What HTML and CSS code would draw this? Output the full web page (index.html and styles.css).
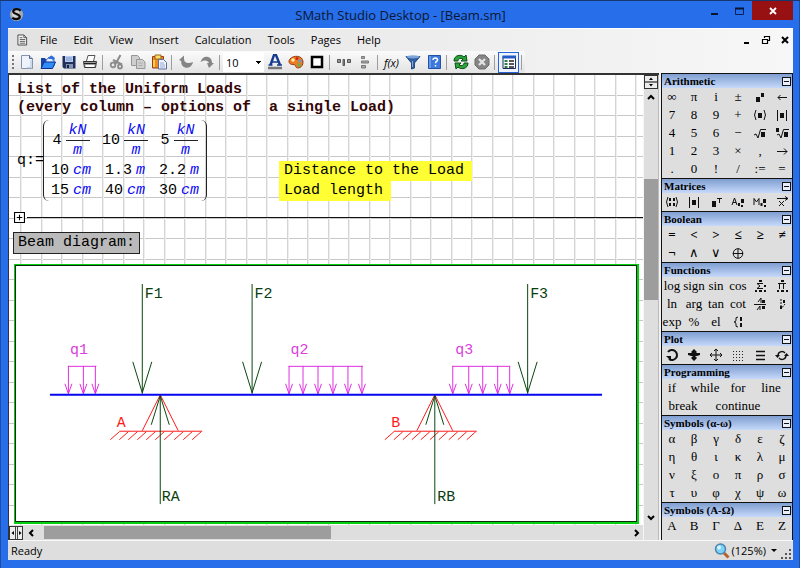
FILE: index.html
```html
<!DOCTYPE html>
<html lang="en">
<head>
<meta charset="utf-8">
<title>SMath Studio Desktop - [Beam.sm]</title>
<link rel="stylesheet" href="styles.css">
</head>
<body>
<div class="window">
  <header class="titlebar">
    <svg class="logo" viewBox="0 0 16 16"><circle cx="8" cy="8" r="7" fill="#a9a9a9"/><circle cx="7" cy="7" r="4" fill="#d4d4d4"/><path d="M12.5 4C10.500 1.500 4.500 1.800 4.500 4.800C4.500 8 11.500 7 11.500 10.500C11.500 13.500 5.500 13.800 3.500 11.500" fill="none" stroke="#0b0b0b" stroke-width="2.400"/></svg>
    <h1 class="title">SMath Studio Desktop - [Beam.sm]</h1>
    <div class="caption-buttons">
      <button class="cap" aria-label="Minimize"><svg viewBox="0 0 10 10"><path d="M1 8h7" stroke="#0a1530" stroke-width="2"/></svg></button>
      <button class="cap" aria-label="Maximize"><svg viewBox="0 0 10 10"><path d="M.5 2.500h8v6h-8z" fill="none" stroke="#0a1f55"/><path d="M0 2.500h9" stroke="#0a1530" stroke-width="2"/></svg></button>
      <button class="cap cap-close" aria-label="Close"><svg viewBox="0 0 10 10"><path d="M2 2l6 6M8 2l-6 6" stroke="#fff" stroke-width="1.800"/></svg></button>
    </div>
  </header>

  <div class="client">
    <nav class="menubar">
      <svg class="doc" viewBox="0 0 12 12"><path d="M1 .5h6.500l3 3v8h-9.500z" fill="#f4f4f4" stroke="#444"/><path d="M7.500 .5v3h3M3 3.500h3M3 5.500h6M3 7.500h6M3 9.500h6" fill="none" stroke="#555"/></svg>
      <ul class="menus">
        <li><button>File</button></li><li><button>Edit</button></li><li><button>View</button></li><li><button>Insert</button></li><li><button>Calculation</button></li><li><button>Tools</button></li><li><button>Pages</button></li><li><button>Help</button></li>
      </ul>
      <div class="mdi">
        <button aria-label="Minimize document"><svg viewBox="0 0 10 10"><path d="M2 8h5" stroke="#000" stroke-width="2"/></svg></button>
        <button aria-label="Restore document"><svg viewBox="0 0 10 10"><path d="M3.500 3V1.500h5v4H7M3 1.500h6" fill="none" stroke="#000" stroke-width="1.200"/><path d="M1.500 4.500h5v4h-5zM1 4.500h6" fill="none" stroke="#000" stroke-width="1.200"/></svg></button>
        <button aria-label="Close document"><svg viewBox="0 0 10 10"><path d="M2 2l6 6M8 2l-6 6" stroke="#000" stroke-width="2"/></svg></button>
      </div>
    </nav>

    <div class="toolbar" role="toolbar">
      <span class="grip"></span>
      <button aria-label="New"><svg viewBox="0 0 16 16"><path d="M2.500 1.500h8l3 3v10h-11z" fill="#eef3fb" stroke="#8593ab"/><path d="M10.500 1.500v3h3" fill="#c9d6ec" stroke="#4d6693"/><path d="M12 6v7.500H8" fill="none" stroke="#c3d2ea" stroke-width="1.500"/></svg></button>
      <button aria-label="Open"><svg viewBox="0 0 16 16"><path d="M1 4h4l1.500 2H12v8H1z" fill="#1944ab"/><path d="M6 6l5-4 3 3v7H6z" fill="#d9ebff" stroke="#3467c9"/><path d="M8 3h4l-1-2 4 3-2 3-1-2H9z" fill="#2c6ee0"/><path d="M1 14.500l3-6.500h11.500l-3 6.500z" fill="#2f8bf5" stroke="#0b2f93"/></svg></button>
      <button aria-label="Save"><svg viewBox="0 0 16 16"><path d="M2 2h12.500v12.500H3L1.500 13V2z" fill="#22305c"/><path d="M4 2h8v6H4z" fill="#b8cdf1"/><path d="M5 4h6M5 6h6" stroke="#7c98cd"/><path d="M5 10h7v4.500H5z" fill="#8492b4"/><path d="M6 11h2v3H6z" fill="#17213f"/></svg></button>
      <button aria-label="Print"><svg viewBox="0 0 16 16"><path d="M4.500 7l1.500-5.500h7L11.500 7" fill="#fff" stroke="#555"/><path d="M1.500 7.500h13l-1 6h-11z" fill="#c9ccc9" stroke="#333"/><path d="M2 9.500h12" stroke="#222" stroke-width="1.500"/><path d="M4 12h8" stroke="#fff" stroke-width="2"/></svg></button>
      <span class="sep"></span>
      <button aria-label="Cut"><svg viewBox="0 0 16 16" fill="none" stroke="#8b8b8b"><path d="M11.500 1L6.500 10M4 6l9 4.500" stroke-width="2"/><circle cx="4" cy="11" r="2.300" stroke-width="1.800"/><circle cx="11" cy="12.500" r="2" stroke-width="1.800"/></svg></button>
      <button aria-label="Copy"><svg viewBox="0 0 16 16" fill="#cfcfcf" stroke="#969696"><path d="M1.500 1.500h6l2 2v8h-8z"/><path d="M6.500 5.500h6l2.500 2.500v6.500H6.500z"/><path d="M8.500 9h4M8.500 11.500h4" stroke="#aaa"/></svg></button>
      <button aria-label="Paste"><svg viewBox="0 0 16 16"><path d="M1.500 2.500h11v11.500h-11z" fill="#f08b22" stroke="#9a3e18"/><path d="M4 1h6v4H4z" fill="#ffe06a" stroke="#9c6417"/><path d="M3 6v7" stroke="#fbd04f" stroke-width="2"/><path d="M7.500 5.500h5l3 3v6.500h-8z" fill="#edf2ff" stroke="#5c6f9c"/><path d="M9 9h4M9 11h5M9 13h5" stroke="#9aacd4"/></svg></button>
      <span class="sep"></span>
      <button aria-label="Undo"><svg viewBox="0 0 16 16"><path d="M1 6l5-4.500v3c0 5 5 5.500 9 3.500-1 5-5 6.500-8 5.500C4 12.500 3 10 3.200 7z" fill="#858585"/></svg></button>
      <button aria-label="Redo"><svg viewBox="0 0 16 16"><path d="M15 9l-5 5-2-5h2C9 6 5 5.500 1.500 8 3 3.500 6 2 9 3c3 .8 4 3 4 6z" fill="#858585"/></svg></button>
      <span class="sep"></span>
      <select class="size" aria-label="Font size"><option>10</option></select>
      <button aria-label="Text colour"><svg viewBox="0 0 16 16"><path d="M3.500 11L7 1h2l4 10" fill="none" stroke="#153b91" stroke-width="2.400"/><path d="M5 8h6M1.500 11h4M10 11h5" stroke="#153b91" stroke-width="1.600"/><path d="M1 14h14" stroke="#777" stroke-width="2.500"/></svg></button>
      <button aria-label="Background colour"><svg viewBox="0 0 16 16"><path d="M2 5C5 1 15 1 15 8c0 6-6 7-7 5-.7-2-1-2.500-3-2.500C1 10.500 0 7.500 2 5z" fill="#ec7d24" stroke="#9a3c17"/><circle cx="5" cy="6" r="1.700" fill="#fff3a3"/><circle cx="9" cy="4.500" r="1.500" fill="#c9271e"/><circle cx="12" cy="7" r="1.500" fill="#5b9ce7"/><circle cx="11" cy="11" r="1.700" fill="#5eb24d"/></svg></button>
      <button aria-label="Border"><svg viewBox="0 0 16 16"><path d="M3 3h10v10H3z" fill="#fff" stroke="#000" stroke-width="2.500"/></svg></button>
      <span class="sep"></span>
      <button aria-label="Align horizontally"><svg viewBox="0 0 16 16" fill="#999" stroke="#555"><path d="M1.500 5.500h3v3h-3zM7 5.500h1.500v6H7zM11.500 5.500h3v3h-3z"/></svg></button>
      <button aria-label="Align vertically"><svg viewBox="0 0 16 16" fill="#aaa" stroke="#777"><path d="M4.500 2.500h3v2h-3zM4.500 7h7v2h-7zM4.500 11.500h4v2.500h-4z"/></svg></button>
      <span class="sep"></span>
      <button class="fx">f(x)</button>
      <button aria-label="Filter"><svg viewBox="0 0 16 16"><path d="M1 2.500h14L9.500 9v5l-3 1V9z" fill="#315ea5" stroke="#28497c"/><ellipse cx="8" cy="2.800" rx="6.500" ry="1.600" fill="#7da5da"/><path d="M7.500 7v6" stroke="#83acdf"/></svg></button>
      <button aria-label="Help book"><svg viewBox="0 0 16 16"><path d="M2.500 1.500h12v13h-12z" fill="#3b79dc" stroke="#2450a5"/><path d="M4 2v12" stroke="#93bcf5"/><path d="M7 6c0-3 5-2.500 4.500.2-.2 1.300-2 1.300-2 3M9.500 11v1.500" fill="none" stroke="#fff" stroke-width="1.500"/></svg></button>
      <span class="sep"></span>
      <button aria-label="Recalculate"><svg viewBox="0 0 16 16"><path d="M1 7c0-6 7-7 10-4l2-2 1 6H8l2-2C7 3.500 5 5 5 7z" fill="#2ba53a" stroke="#0a4d14"/><path d="M15 9c0 6-7 7-10 4l-2 2-1-6h6l-2 2c3 1.500 5 0 5-2z" fill="#2ba53a" stroke="#0a4d14"/></svg></button>
      <button aria-label="Stop"><svg viewBox="0 0 16 16"><path d="M5 1h6l4 4v6l-4 4H5l-4-4V5z" fill="#858585" stroke="#6c6c6c"/><path d="M5 5l6 6M11 5l-6 6" stroke="#e4e4e4" stroke-width="2.200"/></svg></button>
      <span class="sep"></span>
      <button class="on" aria-label="Side panel"><svg viewBox="0 0 16 16"><path d="M2 2.500h12.500v12H2z" fill="#fff" stroke="#1b2a5d"/><path d="M1.500 3h13.500" stroke="#2457c8" stroke-width="3"/><path d="M3.500 7h3M3.500 10h3M3.500 13h3" stroke="#27814b" stroke-width="1.800"/><path d="M8 7h5M8 10h5M8 13h5" stroke="#222" stroke-width="1.500"/></svg></button>
      <span class="sep"></span>
    </div>

    <div class="workspace">
      <main class="editor">
        <div class="sheet">
          <h2 class="heading">
            <span>List of the Uniform Loads</span>
            <span class="split"><span>(every column – options of</span><span>a single Load)</span></span>
          </h2>
          <div class="formula-row">
            <div class="formula">
              <span class="lhs">q:=</span>
              <table class="matrix">
                <tr class="loads">
                  <td><span class="val">4<span class="frac"><i>kN</i><i>m</i></span></span></td>
                  <td><span class="val">10<span class="frac"><i>kN</i><i>m</i></span></span></td>
                  <td><span class="val">5<span class="frac"><i>kN</i><i>m</i></span></span></td>
                </tr>
                <tr><td><span class="val">10<i>cm</i></span></td><td><span class="val">1.3<i>m</i></span></td><td><span class="val">2.2<i>m</i></span></td></tr>
                <tr><td><span class="val">15<i>cm</i></span></td><td><span class="val">40<i>cm</i></span></td><td><span class="val">30<i>cm</i></span></td></tr>
              </table>
            </div>
            <div class="notes"><mark>Distance to the Load</mark><mark>Load length</mark></div>
          </div>
          <div class="area"><button aria-label="Expand area"><svg viewBox="0 0 10 10"><path d="M.5.5h9v9h-9z" fill="#fff" stroke="#000"/><path d="M2.500 5h5M5 2.500v5" stroke="#000"/></svg></button></div>
          <p class="caption">Beam diagram:</p>
          <figure class="plot">
            <svg viewBox="16 266 621 255" preserveAspectRatio="xMinYMin meet" role="img" aria-label="Beam diagram">
              <defs>
                <g id="force"><path d="M.5 0V110"/><path d="M-9 78L.5 109L10 78"/></g>
                <g id="q"><path d="M.5 0V28"/><path d="M-3 18L.5 28L4 18"/></g>
                <g id="support">
                  <path d="M0 395L-18 431M0 395L18 431M-41 431.500H42" stroke="#ff1a1a"/>
                  <path d="M-50 440l9-8M-41 440l9-8M-32 440l9-8M-23 440l9-8M-14 440l9-8M-5 440l9-8M4 440l9-8M14 440l9-8M23 440l9-8M32 440l9-8" stroke="#ff1a1a"/>
                  <path d="M0 396V504.500" stroke="#0a460f"/>
                  <path d="M-9 425L0 396L9 425" stroke="#0a460f"/>
                </g>
              </defs>
              <g fill="none" stroke="#e030e0">
                <path d="M68 366.500h28.500M289 366.500h74.500M453 366.500h57.500"/>
                <use href="#q" x="68" y="366"/><use href="#q" x="83" y="366"/><use href="#q" x="95" y="366"/>
                <use href="#q" x="289" y="366"/><use href="#q" x="303" y="366"/><use href="#q" x="318" y="366"/><use href="#q" x="333" y="366"/><use href="#q" x="348" y="366"/><use href="#q" x="362" y="366"/>
                <use href="#q" x="453" y="366"/><use href="#q" x="469" y="366"/><use href="#q" x="483" y="366"/><use href="#q" x="498" y="366"/><use href="#q" x="510" y="366"/>
              </g>
              <g fill="none" stroke="#0a460f">
                <use href="#force" x="142" y="284"/><use href="#force" x="252" y="284"/><use href="#force" x="528" y="284"/>
              </g>
              <g fill="none"><use href="#support" x="160.500"/><use href="#support" x="435.500"/></g>
              <path d="M50 395H603" stroke="#0505f0" stroke-width="2"/>
              <g class="force-label"><text x="145" y="298">F1</text><text x="255" y="298">F2</text><text x="531" y="298">F3</text><text x="162" y="501">RA</text><text x="438" y="501">RB</text></g>
              <g class="load-label"><text x="70" y="354">q1</text><text x="291" y="354">q2</text><text x="456" y="354">q3</text></g>
              <g class="support-label"><text x="117" y="427">A</text><text x="392" y="427">B</text></g>
            </svg>
          </figure>
        </div>
        <div class="vscroll">
          <button class="splitter" aria-label="Split view"><svg viewBox="0 0 14 14"><path d="M0 7h14" stroke="#777" stroke-width="2"/><path d="M5 5l2-2.500L9 5zM5 9l2 2.500L9 9z" fill="#000"/></svg></button>
          <button aria-label="Scroll up"><svg viewBox="0 0 14 14"><path d="M4 10l3-3 3 3" fill="none" stroke="#000" stroke-width="2"/></svg></button>
          <div class="vtrack"><div class="vthumb"></div></div>
          <button aria-label="Scroll down"><svg viewBox="0 0 14 14"><path d="M4 5l3 3 3-3" fill="none" stroke="#000" stroke-width="2"/></svg></button>
        </div>
        <div class="hscroll">
          <button class="splitter" aria-label="Split columns"><svg viewBox="0 0 14 14"><path d="M6.500 1v12M8.500 1v12" stroke="#444"/><path d="M5 5L2.500 7L5 9zM10 5l2.500 2L10 9z" fill="#000"/></svg></button>
          <button aria-label="Scroll left"><svg viewBox="0 0 14 14"><path d="M10 4L7 7l3 3" fill="none" stroke="#000" stroke-width="2"/></svg></button>
          <div class="htrack"><div class="hthumb"></div></div>
          <button aria-label="Scroll right"><svg viewBox="0 0 14 14"><path d="M6 4l3 3-3 3" fill="none" stroke="#000" stroke-width="2"/></svg></button>
        </div>
      </main>

      <aside class="palettes">
        <section><h3>Arithmetic<button class="fold" aria-label="Collapse"></button></h3>
          <div class="keys">
            <button>∞</button><button>π</button><button>i</button><button>±</button><button aria-label="Power"><svg viewBox="0 0 16 16"><path d="M4 8h4v5H4zM9 4h3v4H9z"/></svg></button><button aria-label="Result"><svg viewBox="0 0 16 16"><path d="M4 8.500h9M6.500 6L4 8.500L6.500 11" fill="none" stroke="#111"/></svg></button>
            <button>7</button><button>8</button><button>9</button><button>+</button><button aria-label="Parentheses"><svg viewBox="0 0 16 16"><path d="M6 6h4v5H6z"/><path d="M4 3Q1 8 4 13M12 3q3 5 0 10" fill="none" stroke="#111"/></svg></button><button aria-label="Absolute value"><svg viewBox="0 0 16 16"><path d="M6 6h4v5H6z"/><path d="M3.500 3v11M12.500 3v11" stroke="#111"/></svg></button>
            <button>4</button><button>5</button><button>6</button><button>−</button><button aria-label="Square root"><svg viewBox="0 0 16 16"><path d="M9 7h4v5H9z"/><path d="M2 10l2-1 2 4L8.500 4.500H14" fill="none" stroke="#111"/></svg></button><button aria-label="Nth root"><svg viewBox="0 0 16 16"><path d="M10 7h4v5h-4zM2 3h3v4H2z"/><path d="M3 10l2-1 2 4L9.500 4.500H15" fill="none" stroke="#111"/></svg></button>
            <button>1</button><button>2</button><button>3</button><button>×</button><button>,</button><button aria-label="Symbolic evaluation"><svg viewBox="0 0 16 16"><path d="M3 8.500h10M10 5.500l3 3-3 3" fill="none" stroke="#111"/></svg></button>
            <button>.</button><button>0</button><button>!</button><button>/</button><button>:=</button><button>=</button>
          </div></section>
        <section><h3>Matrices<button class="fold" aria-label="Collapse"></button></h3>
          <div class="keys">
            <button aria-label="Matrix"><svg viewBox="0 0 16 16"><path d="M5 4h2v3H5zM9 4h2v3H9zM5 9h2v3H5zM9 9h2v3H9z"/><path d="M4 3Q1 8 4 13M12 3q3 5 0 10" fill="none" stroke="#111"/></svg></button>
            <button aria-label="Determinant"><svg viewBox="0 0 16 16"><path d="M6 6h4v5H6z"/><path d="M3.500 3v11M12.500 3v11" stroke="#111"/></svg></button>
            <button aria-label="Transpose"><svg viewBox="0 0 16 16"><path d="M4 7h4v6H4z"/><path d="M9 4.500h5M11.500 4.500V9" stroke="#111"/></svg></button>
            <button aria-label="Algebraic addition"><svg viewBox="0 0 16 16"><path d="M2 11L4.500 4L7 11M3 8.500h3" fill="none" stroke="#111"/><path d="M8 9h2v3H8zM11 5h3v4h-3zM11 11h2v2h-2z"/></svg></button>
            <button aria-label="Minor"><svg viewBox="0 0 16 16"><path d="M2 11V4.500L4.500 8L7 4.500V11" fill="none" stroke="#111"/><path d="M8.500 9h2v3h-2zM11 5h3v4h-3zM12 11h2v2h-2z"/></svg></button>
            <button aria-label="Cross product"><svg viewBox="0 0 16 16"><path d="M3 4.500h11M11 2.500l3 2-3 2M5 7l5 5M10 7l-5 5" fill="none" stroke="#111"/></svg></button>
          </div></section>
        <section><h3>Boolean<button class="fold" aria-label="Collapse"></button></h3>
          <div class="keys bold">
            <button>=</button><button>&lt;</button><button>&gt;</button><button>≤</button><button>≥</button><button>≠</button>
            <button>¬</button><button class="thin">∧</button><button class="thin">∨</button><button aria-label="Exclusive or"><svg viewBox="0 0 16 16"><path d="M8 3.500v10M3 8.500h10" stroke="#111"/><circle cx="8" cy="8.500" r="4.800" fill="none" stroke="#111"/></svg></button>
          </div></section>
        <section><h3>Functions<button class="fold" aria-label="Collapse"></button></h3>
          <div class="keys">
            <button>log</button><button>sign</button><button>sin</button><button>cos</button>
            <button aria-label="Sum"><svg viewBox="0 0 16 16"><path d="M11 5.500H5L8 8l-3 2.500h6" fill="none" stroke="#111"/><path d="M7 2h3v2H7zM3 12h2v2H3zM7 12h3v2H7zM12 12h2v2h-2zM12 7h2v2h-2z"/></svg></button>
            <button aria-label="Product"><svg viewBox="0 0 16 16"><path d="M4 5.500h8M5.500 5v6M9.500 5v6" fill="none" stroke="#111"/><path d="M7 2h3v2H7zM3 12h2v2H3zM7 12h3v2H7zM12 12h2v2h-2z"/></svg></button>
            <button>ln</button><button>arg</button><button>tan</button><button>cot</button>
            <button aria-label="Derivative"><svg viewBox="0 0 16 16"><path d="M2 8.500h12M6 6l3-4v5M5 14l3-4v4" fill="none" stroke="#111"/><path d="M10 4h3v3h-3zM10 10h3v3h-3z"/></svg></button>
            <button aria-label="System"><svg viewBox="0 0 16 16"><path d="M7 3v10l4-5" fill="none" stroke="#111" stroke-dasharray="2 1"/><path d="M9 4h2v3H9zM6 10h2v3H6z"/></svg></button>
            <button>exp</button><button>%</button><button>el</button>
            <button aria-label="Cases"><svg viewBox="0 0 16 16"><path d="M8 3Q5 3 6 6Q6 8 4 8Q6 8 6 10Q5 13 8 13" fill="none" stroke="#111"/><path d="M10 3h2v4h-2zM10 9h2v4h-2z"/></svg></button>
          </div></section>
        <section><h3>Plot<button class="fold" aria-label="Collapse"></button></h3>
          <div class="keys">
            <button aria-label="Rotate"><svg viewBox="0 0 16 16"><path d="M4 5a5 5 0 1 1 1 7" fill="none" stroke="#111" stroke-width="2"/><path d="M2 9h5v5z"/></svg></button>
            <button aria-label="Scale"><svg viewBox="0 0 16 16"><path d="M8 2l3 3-1 1h4v2l-3 1H9l2 2-3 3-3-3 2-2H5L2 8V6h4L5 5z"/></svg></button>
            <button aria-label="Move"><svg viewBox="0 0 16 16"><path d="M8 2v12M2 8h12M6 4l2-2 2 2M6 12l2 2 2-2M4 6L2 8l2 2M12 6l2 2-2 2" fill="none" stroke="#111"/></svg></button>
            <button aria-label="Points"><svg viewBox="0 0 16 16"><path d="M3 4.500h11M3 7.500h11M3 10.500h11M3 13.500h11" stroke="#222" stroke-dasharray="1 2"/></svg></button>
            <button aria-label="Lines"><svg viewBox="0 0 16 16"><path d="M4 4.500h9M4 8.500h9M4 12.500h9" stroke="#111" stroke-width="1.500"/></svg></button>
            <button aria-label="Refresh"><svg viewBox="0 0 16 16"><path d="M4 9a4 4 0 0 1 7-3M12 8a4 4 0 0 1-7 3" fill="none" stroke="#111" stroke-width="1.400"/><path d="M1 8h5l-2.500 3zM10 9h5l-2.500-3z"/></svg></button>
          </div></section>
        <section><h3>Programming<button class="fold" aria-label="Collapse"></button></h3>
          <div class="keys">
            <button>if</button><button class="w2">while</button><button>for</button><button class="w2">line</button>
            <button class="w2">break</button><button class="w3">continue</button>
          </div></section>
        <section><h3>Symbols (α-ω)<button class="fold" aria-label="Collapse"></button></h3>
          <div class="keys">
            <button>α</button><button>β</button><button>γ</button><button>δ</button><button>ε</button><button>ζ</button>
            <button>η</button><button>θ</button><button>ι</button><button>κ</button><button>λ</button><button>μ</button>
            <button>ν</button><button>ξ</button><button>ο</button><button>π</button><button>ρ</button><button>σ</button>
            <button>τ</button><button>υ</button><button>φ</button><button>χ</button><button>ψ</button><button>ω</button>
          </div></section>
        <section><h3>Symbols (Α-Ω)<button class="fold" aria-label="Collapse"></button></h3>
          <div class="keys">
            <button>Α</button><button>Β</button><button>Γ</button><button>Δ</button><button>Ε</button><button>Ζ</button>
            <button>Η</button><button>Θ</button><button>Ι</button><button>Κ</button><button>Λ</button><button>Μ</button>
          </div></section>
      </aside>
    </div>

    <footer class="status">
      <span class="ready">Ready</span>
      <button class="zoom"><svg viewBox="0 0 16 16"><path d="M10 10l4.500 4.500" stroke="#b8622a" stroke-width="3"/><circle cx="6.500" cy="6" r="5" fill="#7fd2f7" stroke="#4a86ad" stroke-width="1.500"/><circle cx="5" cy="4.500" r="2" fill="#d6f3ff"/></svg>(125%)<span class="arrow"></span></button>
      <svg class="resize" viewBox="0 0 12 12" fill="#555"><path d="M9 1h2v2H9zM5 5h2v2H5zM9 5h2v2H9zM1 9h2v2H1zM5 9h2v2H5zM9 9h2v2H9z"/></svg>
    </footer>
  </div>
</div>
</body>
</html>
```
FILE: styles.css
```css
* { box-sizing: border-box; }

body {
  margin: 0;
  font-family: "Open Sans", "Noto Sans", sans-serif;
  font-size: 11px;
  color: #000;
}

button {
  margin: 0;
  padding: 0;
  border: 0;
  background: none;
  color: inherit;
  font: inherit;
  display: flex;
  align-items: center;
  justify-content: center;
}

svg { display: block; }

.window {
  height: 100vh;
  display: flex;
  flex-direction: column;
  padding: 0 7px 8px 8px;
  background: #266eea;
  border-top: 1px solid #17386f;
  box-shadow: inset 1px 0 #1c4ea6, inset -1px 0 #1c4ea6;
}

/* Title bar */
.titlebar {
  display: grid;
  grid-template-columns: 1fr auto 1fr;
  height: 27px;
  flex: none;
}
.logo { width: 15px; height: 15px; margin: 6px 0 0 1px; }
.title {
  margin: 0;
  font-size: 13px;
  font-weight: 400;
  line-height: 29px;
  color: #0c1733;
}
.caption-buttons { display: flex; justify-content: flex-end; align-items: flex-start; }
.cap { width: 25px; height: 19px; }
.cap svg { width: 10px; height: 10px; }
.cap-close { width: 41px; background: #971113; }

.client {
  flex: 1;
  min-height: 0;
  display: flex;
  flex-direction: column;
  background: linear-gradient(90deg, #e2e2e2, #f7f7f7);
  border-top: 1px solid #fff;
}

/* Menu bar */
.menubar { display: flex; align-items: center; height: 22px; flex: none; padding: 0 3px 0 9px; }
.doc { width: 11px; height: 12px; }
.menus { display: flex; gap: 16px; margin: 0 auto 0 12px; padding: 0; list-style: none; }
.menus button { line-height: 20px; font-weight: 500; }
.mdi { display: flex; gap: 9px; }
.mdi svg { width: 10px; height: 10px; }

/* Toolbar */
.toolbar {
  display: flex;
  align-items: center;
  align-self: flex-start;
  height: 22px;
  flex: none;
  padding-left: 4px;
  background: linear-gradient(#fbfbfb, #e3e3e3);
  border-radius: 0 3px 3px 0;
}
.toolbar button { width: 21px; height: 21px; }
.toolbar button svg { width: 16px; height: 16px; }
.toolbar .on { border: 1px solid #2463d8; background: #eef3fd; }
.toolbar .fx { font: italic 11px "Open Sans", sans-serif; }
.grip { width: 2px; height: 14px; margin-right: 2px; background: repeating-linear-gradient(#777 0 2px, transparent 2px 4px); }
.sep { width: 1px; height: 15px; margin: 0 3px 0 2px; background: #9d9d9d; }
.size {
  appearance: none;
  width: 41px;
  height: 20px;
  padding: 0 0 0 3px;
  border: 0;
  border-radius: 0;
  font: 11px "Open Sans", sans-serif;
  color: #000;
  background: linear-gradient(135deg, #000 50%, transparent 50%) 36px 9px / 3px 3px no-repeat, linear-gradient(225deg, #000 50%, transparent 50%) 33px 9px / 3px 3px no-repeat, #fff;
}

/* Workspace */
.workspace { flex: 1; min-height: 0; display: flex; gap: 2px; background: #f2f2f2; }
.editor {
  flex: 1;
  min-width: 0;
  display: grid;
  grid-template: minmax(0, 1fr) 15px / minmax(0, 1fr) 16px;
  border: 1px solid #333;
  border-width: 2px 0 0 1px;
  background: #dedede;
}
.sheet {
  overflow: hidden;
  padding: 6px 4px 0 5px;
  font-family: "Liberation Mono", monospace;
  font-size: 15px;
  background-color: #fff;
  background-image:
    linear-gradient(90deg, transparent 11px, #d4d4d4 11px 12px, #efefef 12px 13px, transparent 13px 32px, #d4d4d4 32px 33px, #efefef 33px 34px, transparent 34px),
    linear-gradient(transparent 20px, #c8c8c8 20px 21px, transparent 21px 40px, #c8c8c8 40px 41px);
  background-size: 41px 41px;
}
.heading { margin: 0 0 3px 3px; font-size: 15px; line-height: 18px; color: #330606; }
.heading > span { display: block; }
.heading .split { display: flex; gap: 18px; }

.formula-row { display: flex; align-items: flex-end; gap: 72px; margin-left: 3px; }
.formula { display: flex; align-items: center; }
.lhs { width: 26px; }
.matrix { position: relative; border: 1px solid #222; border-width: 0 1px; border-radius: 6px; border-spacing: 0; }
.matrix td { width: 54px; height: 20px; padding: 0; line-height: 18px; }
.matrix .loads td { height: 41px; }
.val { display: flex; align-items: center; justify-content: center; gap: 4px; }
.val i { color: #0a0af5; }
.frac { display: grid; }
.frac i { padding: 0 3px; text-align: center; line-height: 19px; }
.frac i:first-child { border-bottom: 1px solid #222; }
.notes { display: flex; flex-direction: column; align-items: flex-start; }
.notes mark { padding: 0 8px 0 5px; line-height: 20px; background: #ff3; }

.area { display: flex; align-items: center; height: 11px; margin-top: 11px; }
.area svg { width: 11px; height: 11px; }
.area::after { content: ""; flex: 1; height: 1px; margin: 0 -4px 0 2px; background: #111; }

.caption {
  width: fit-content;
  margin: 9px 0 10px -1px;
  padding: 0 4px;
  border: 1px solid #222;
  line-height: 20px;
  background: #bababa;
}
.plot { margin: 0; border: 1px solid #05d010; border-width: 1px 2px 2px 1px; background: #fff; }
.plot svg { width: 100%; border: 1px solid #0c2a0c; }
.plot text { font-family: "Liberation Mono", monospace; font-size: 15px; }
.force-label { fill: #0a3d10; }
.load-label { fill: #dc40dc; }
.support-label { fill: #ff1a1a; }

/* Scroll bars */
.vscroll { display: flex; flex-direction: column; align-items: center; grid-row: 1 / 3; padding-bottom: 15px; border-right: 1px solid #bbb; border-left: 1px solid #f5f5f5; }
.vscroll svg, .hscroll svg { width: 14px; height: 14px; }
.vtrack { flex: 1; width: 100%; padding-top: 76px; }
.vthumb { height: 121px; background: #9d9d9d; }
.hscroll { display: flex; align-items: center; grid-column: 1; grid-row: 2; }
.htrack { flex: 1; padding-left: 7px; }
.hthumb { width: 49%; height: 13px; background: #9d9d9d; }
.splitter { outline: 1px solid #333; outline-offset: -1px; background: #ededed; }

/* Palettes */
.palettes { width: 132px; flex: none; overflow: hidden; border: 1px solid #111; border-width: 0 1px; background: #dedede; font-family: "Liberation Serif", serif; }
.palettes h3 {
  display: flex;
  align-items: center;
  justify-content: space-between;
  height: 15px;
  margin: 0;
  padding: 0 1px 0 2px;
  border-top: 1px solid #111;
  font-size: 11px;
  line-height: 14px;
  background: linear-gradient(#7f9ed0, #c6d9fa);
}
.fold { width: 9px; height: 9px; border: 1px solid #111; background: linear-gradient(#111, #111) center / 5px 1px no-repeat #e9eefa; }
.keys { display: grid; grid-template-columns: repeat(6, 22px); margin: 0 -1px; font-size: 13px; }
.keys button { height: 18px; white-space: nowrap; }
.keys svg { width: 16px; height: 16px; fill: #111; }
.bold { font-weight: 700; }
.keys .thin { font-weight: 400; }
.w2 { grid-column: span 2; }
.w3 { grid-column: span 3; }

/* Status bar */
.status { display: flex; align-items: center; height: 20px; flex: none; padding: 0 1px 0 3px; border-top: 1px solid #f8f8f8; background: #dedede; }
.ready { flex: 1; }
.zoom { gap: 2px; }
.zoom svg { width: 16px; height: 16px; }
.arrow { margin: 0 3px; border: 3px solid transparent; border-top-color: #000; border-bottom-width: 0; }
.resize { width: 12px; height: 12px; align-self: flex-end; }
```
